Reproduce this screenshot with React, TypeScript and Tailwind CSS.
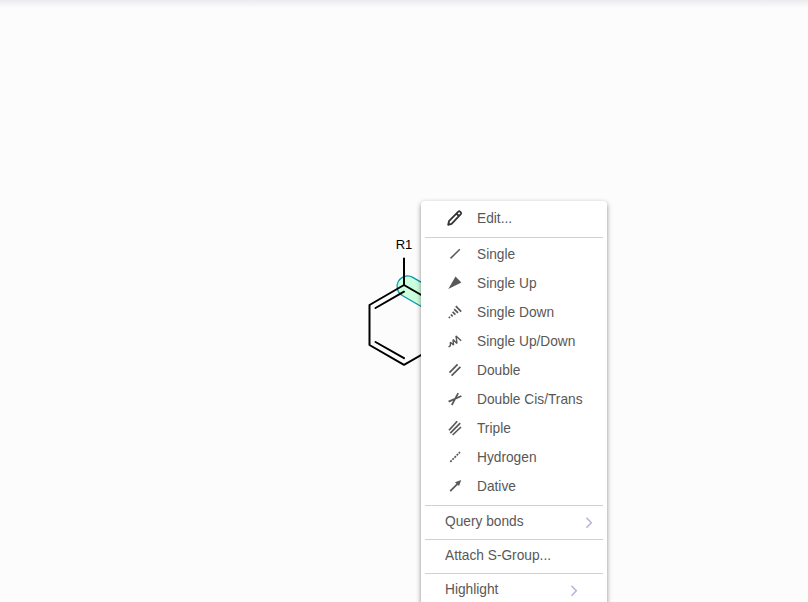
import type { ReactNode } from "react";

const bonds: { label: string; icon: ReactNode }[] = [
  { label: "Single", icon: <path d="M5.5 14.4 14.8 5.3" strokeWidth="1.5" /> },
  { label: "Single Up", icon: <path d="M3.3 16 10.5 3.5 16.4 9.4Z" fill="currentColor" stroke="none" /> },
  {
    label: "Single Down",
    icon: <path d="M3.8 14.8 5 16M5.9 12.5 7.7 14.3M7.6 9.9 10.4 12.7M9.2 7.1 13 10.9M10.8 4.2 16.2 9.6" />,
  },
  {
    label: "Single Up/Down",
    icon: <path d="M3.6 16 5.4 14.6 5.4 11.2 8.6 14 8 8.6 12 12.4 11 5 16.2 9.8" strokeWidth="1.4" strokeLinejoin="bevel" />,
  },
  { label: "Double", icon: <path d="M4.5 12.6 12.6 4.4M6.6 15.6 15.4 6.8" /> },
  { label: "Double Cis/Trans", icon: <path d="M3.6 12.6 16.4 7M6.8 16 13.2 4.2" /> },
  { label: "Triple", icon: <path d="M4 12.2 12.2 3.2M5.3 15.2 15.2 5.2M7.6 17 16 9" /> },
  { label: "Hydrogen", icon: <path d="M5.3 14.8 15 5.1" strokeDasharray="2 1" /> },
  {
    label: "Dative",
    icon: (
      <>
        <path d="M5.2 15.2 12.5 7.9" />
        <path d="M16.2 4 14 10 10 6.2Z" fill="currentColor" stroke="none" />
      </>
    ),
  },
];

function Label({ children }: { children: ReactNode }) {
  return <span className="inline-block origin-left scale-x-[0.915] whitespace-nowrap text-[15px] leading-5">{children}</span>;
}

function Separator() {
  return <div className="mx-1 h-px shrink-0 bg-[#cad3dd]" />;
}

function Chevron() {
  return (
    <svg className="mt-1" width="8" height="12" viewBox="0 0 8 12" fill="none" stroke="#b4b4d6" strokeWidth="1.5">
      <path d="M1.5 .8 6.3 5.8 1.5 10.8" />
    </svg>
  );
}

function Molecule() {
  return (
    <svg className="absolute left-[360px] top-[230px]" width="120" height="140" viewBox="360 230 120 140">
      <rect x="-10" y="-10" width="60" height="21" rx="10.5" transform="translate(407.3 285.8) rotate(30)" fill="#ccffdd" stroke="#0097a8" strokeWidth="1.2" />
      <g stroke="#000" strokeWidth="2" strokeLinecap="round" strokeLinejoin="round" fill="none">
        <path d="M404 258.5V285L438.6 305V345L404 364.8 369.5 345V305L404 285" />
        <path d="M375.5 308 404 291.7M375.5 342 404 358.2" />
      </g>
      <text x="404" y="249" textAnchor="middle" className="font-['Liberation_Sans',sans-serif] text-[13px]" fill="#000">
        R1
      </text>
    </svg>
  );
}

export default function App() {
  return (
    <main className="relative h-[602px] w-[808px] overflow-hidden bg-[#fcfcfc] font-['Liberation_Sans',sans-serif] text-sm text-[#585858]">
      <div className="h-2 bg-gradient-to-b from-[#ebebf0] to-[#fcfcfc]" />
      <Molecule />
      <div className="absolute left-[421px] top-[201px] flex h-[430px] w-[186px] flex-col rounded bg-white shadow-[0_2px_5px_rgba(0,0,0,0.45)]">
        <div className="flex h-9 shrink-0 items-center pb-0.5 pl-6">
          <svg className="text-[#333]" width="20" height="20" viewBox="0 0 20 20" fill="none" stroke="currentColor" strokeWidth="1.8" strokeLinejoin="round">
            <path d="M3.2 16.8 4 13.2 13.3 3.7Q14.2 2.9 15.1 3.7L15.8 4.4Q16.6 5.3 15.8 6.2L6.6 15.9ZM11.5 5.7 13.8 8" />
          </svg>
          <div className="ml-3 flex"><Label>Edit...</Label></div>
        </div>
        <Separator />
        <div className="flex shrink-0 flex-col pb-[5px] pt-px">
          {bonds.map(({ label, icon }) => (
            <div key={label} className="flex h-[29px] items-center pl-6">
              <svg width="20" height="20" viewBox="0 0 20 20" fill="none" stroke="currentColor" strokeWidth="1.7">
                {icon}
              </svg>
              <div className="ml-3 flex"><Label>{label}</Label></div>
            </div>
          ))}
        </div>
        <Separator />
        <div className="flex h-[33px] shrink-0 items-center justify-between pb-[3px] pl-6 pr-[14px]">
          <Label>Query bonds</Label>
          <Chevron />
        </div>
        <Separator />
        <div className="flex h-[33px] shrink-0 items-center pb-[3px] pl-6"><Label>Attach S-Group...</Label></div>
        <Separator />
        <div className="flex h-[33px] shrink-0 items-center justify-between pb-[3px] pl-6 pr-[29px]">
          <Label>Highlight</Label>
          <Chevron />
        </div>
      </div>
    </main>
  );
}
